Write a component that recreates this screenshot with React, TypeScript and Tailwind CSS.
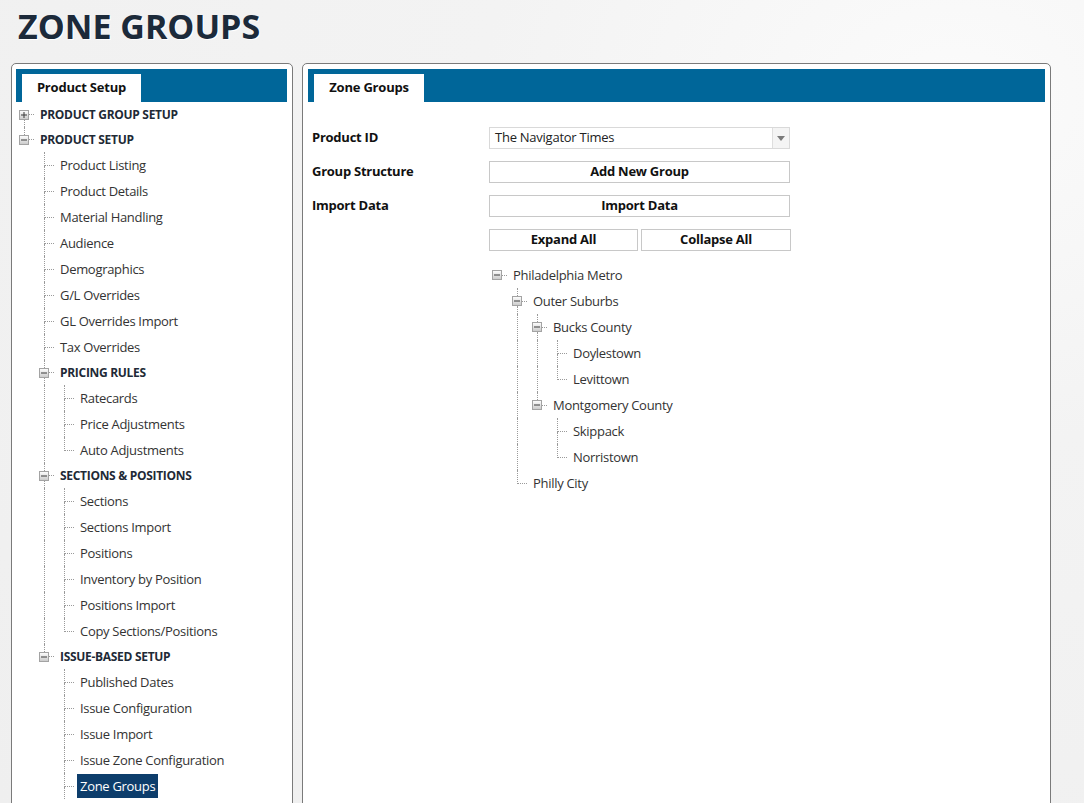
import React from "react";

type Node = {
  label: string;
  icon?: "plus" | "minus";
  header?: boolean;
  selected?: boolean;
  children?: Node[];
};

type FlatRow = {
  node: Node;
  guides: boolean[];
  last: boolean;
  noTop: boolean;
};

function flatten(nodes: Node[], guides: boolean[], root: boolean, out: FlatRow[]) {
  nodes.forEach((n, i) => {
    const last = i === nodes.length - 1;
    out.push({ node: n, guides, last, noTop: root && i === 0 });
    if (n.children && n.icon === "minus") {
      flatten(n.children, [...guides, !last], false, out);
    }
  });
  return out;
}

const DOT = "border-dotted border-[#9a9a9a]";

function ToggleIcon({ kind }: { kind: "plus" | "minus" }) {
  return (
    <svg width="10" height="10" viewBox="0 0 10 10" className="shrink-0 ml-[5px] block">
      <defs>
        <linearGradient id="tg" x1="0" y1="0" x2="0" y2="1">
          <stop offset="0" stopColor="#ffffff" />
          <stop offset="1" stopColor="#c9c9c9" />
        </linearGradient>
      </defs>
      <rect x="0.5" y="0.5" width="9" height="9" fill="url(#tg)" stroke="#a3a3a3" />
      <rect x="2" y="4.5" width="6" height="1" fill="#3a3a3a" />
      {kind === "plus" && <rect x="4.5" y="2" width="1" height="6" fill="#3a3a3a" />}
    </svg>
  );
}

function TreeRow({ row, h }: { row: FlatRow; h: number }) {
  const { node, guides, last, noTop } = row;
  return (
    <div className="flex items-stretch" style={{ height: h }}>
      {guides.map((g, i) => (
        <div key={i} className="w-[20px] shrink-0">
          {g && <div className={`ml-[10px] h-full border-l ${DOT}`} />}
        </div>
      ))}
      {node.icon ? (
        <div className="w-[20px] shrink-0 flex flex-col">
          <div className={`ml-[10px] flex-1 ${noTop ? "" : `border-l ${DOT}`}`} />
          <div className="flex items-center h-[10px]">
            <ToggleIcon kind={node.icon} />
            <div className={`flex-1 h-0 border-t ${DOT}`} />
          </div>
          <div className={`ml-[10px] flex-1 ${last ? "" : `border-l ${DOT}`}`} />
        </div>
      ) : (
        <div className="w-[20px] shrink-0 flex flex-col">
          <div className={`ml-[10px] flex-1 border-l border-b ${DOT}`} />
          <div className={`ml-[10px] flex-1 ${last ? "" : `border-l ${DOT}`}`} />
        </div>
      )}
      <div className="flex items-center ml-[3px]">
        <span
          className={`px-[3px] leading-[24px] whitespace-nowrap ${
            node.selected ? "bg-[#0d3d6b] text-white" : ""
          } ${
            node.header
              ? "font-bold text-[12px] tracking-[-0.3px] text-[#1e2a36] uppercase"
              : "text-[13px] tracking-[-0.3px] text-[#333]"
          }`}
        >
          {node.label}
        </span>
      </div>
    </div>
  );
}

const leftTree: Node[] = [
  { label: "PRODUCT GROUP SETUP", icon: "plus", header: true },
  {
    label: "PRODUCT SETUP",
    icon: "minus",
    header: true,
    children: [
      { label: "Product Listing" },
      { label: "Product Details" },
      { label: "Material Handling" },
      { label: "Audience" },
      { label: "Demographics" },
      { label: "G/L Overrides" },
      { label: "GL Overrides Import" },
      { label: "Tax Overrides" },
      {
        label: "PRICING RULES",
        icon: "minus",
        header: true,
        children: [{ label: "Ratecards" }, { label: "Price Adjustments" }, { label: "Auto Adjustments" }],
      },
      {
        label: "SECTIONS & POSITIONS",
        icon: "minus",
        header: true,
        children: [
          { label: "Sections" },
          { label: "Sections Import" },
          { label: "Positions" },
          { label: "Inventory by Position" },
          { label: "Positions Import" },
          { label: "Copy Sections/Positions" },
        ],
      },
      {
        label: "ISSUE-BASED SETUP",
        icon: "minus",
        header: true,
        children: [
          { label: "Published Dates" },
          { label: "Issue Configuration" },
          { label: "Issue Import" },
          { label: "Issue Zone Configuration" },
          { label: "Zone Groups", selected: true },
        ],
      },
    ],
  },
];

const rightTree: Node[] = [
  {
    label: "Philadelphia Metro",
    icon: "minus",
    children: [
      {
        label: "Outer Suburbs",
        icon: "minus",
        children: [
          { label: "Bucks County", icon: "minus", children: [{ label: "Doylestown" }, { label: "Levittown" }] },
          { label: "Montgomery County", icon: "minus", children: [{ label: "Skippack" }, { label: "Norristown" }] },
        ],
      },
      { label: "Philly City" },
    ],
  },
];

function Tab({ label, w }: { label: string; w: string }) {
  return (
    <div className="h-[33px] bg-[#006699] flex items-end">
      <div
        className={`ml-[6px] h-[28px] ${w} bg-white flex items-center justify-center text-[13px] tracking-[-0.2px] font-bold text-[#111]`}
      >
        {label}
      </div>
    </div>
  );
}

function Btn({ children, w }: { children: React.ReactNode; w: string }) {
  return (
    <div
      className={`${w} h-[22px] border border-[#c8c8c8] bg-white flex items-center justify-center text-[13px] tracking-[-0.25px] font-bold text-[#111]`}
    >
      {children}
    </div>
  );
}

export default function App() {
  const leftRows = flatten(leftTree, [], true, []);
  // keep the ISSUE-BASED SETUP children line running past the viewport edge
  const zg = leftRows.find((r) => r.node.selected);
  if (zg) zg.last = false;
  const rightRows = flatten(rightTree, [], true, []);
  return (
    <div
      className="w-[1084px] h-[803px] overflow-hidden bg-[radial-gradient(ellipse_at_88%_12%,#fbfbfb_0%,#f3f3f3_35%,#efefef_100%)]"
      style={{ fontFamily: '"Open Sans", "Noto Sans", sans-serif' }}
    >
      <div className="h-[63px] pl-[18px] pt-[2px]">
        <h1 className="text-[34px] leading-[48px] font-bold tracking-[0px] text-[#1c2a3a] [text-shadow:1px_1px_0_#ffffff]">
          ZONE GROUPS
        </h1>
      </div>
      <div className="flex gap-[9px] pl-[11px]">
        {/* Left panel */}
        <div className="w-[282px] h-[760px] bg-white border border-[#7a7a7a] rounded-[5px] pt-[5px] pl-[4px] pr-[5px]">
          <Tab label="Product Setup" w="w-[119px]" />
          <div className="-ml-[2px]">
            {leftRows.map((r, i) => (
              <TreeRow key={i} row={r} h={r.node.header ? 25 : 26} />
            ))}
          </div>
        </div>
        {/* Right panel */}
        <div className="w-[749px] h-[760px] bg-white border border-[#7a7a7a] rounded-[5px] pt-[5px] px-[5px]">
          <Tab label="Zone Groups" w="w-[110px]" />
          <div className="pl-[4px] pt-[24px] flex flex-col text-[13px]">
            <div className="flex flex-col gap-[12px] pt-[1px]">
              <div className="flex items-center">
                <div className="w-[177px] font-bold tracking-[-0.25px] text-[#111]">Product ID</div>
                <div className="w-[301px] h-[22px] border border-[#d9d9d9] flex">
                  <div className="flex-1 flex items-center pl-[5px] tracking-[-0.25px] text-[#222]">The Navigator Times</div>
                  <div className="w-[17px] bg-[#f4f4f4] border-l border-[#dedede] flex items-center justify-center">
                    <svg width="8" height="5" viewBox="0 0 8 5">
                      <path d="M0 0 H8 L4 5 Z" fill="#7a7a7a" />
                    </svg>
                  </div>
                </div>
              </div>
              <div className="flex items-center">
                <div className="w-[177px] font-bold tracking-[-0.25px] text-[#111]">Group Structure</div>
                <Btn w="w-[301px]">Add New Group</Btn>
              </div>
              <div className="flex items-center">
                <div className="w-[177px] font-bold tracking-[-0.25px] text-[#111]">Import Data</div>
                <Btn w="w-[301px]">Import Data</Btn>
              </div>
              <div className="flex items-center">
                <div className="w-[177px]" />
                <Btn w="w-[149px]">Expand All</Btn>
                <div className="w-[3px]" />
                <Btn w="w-[150px]">Collapse All</Btn>
              </div>
            </div>
            <div className="pl-[175px] pt-[11px]">
              {rightRows.map((r, i) => (
                <TreeRow key={i} row={r} h={26} />
              ))}
            </div>
          </div>
        </div>
      </div>
    </div>
  );
}
